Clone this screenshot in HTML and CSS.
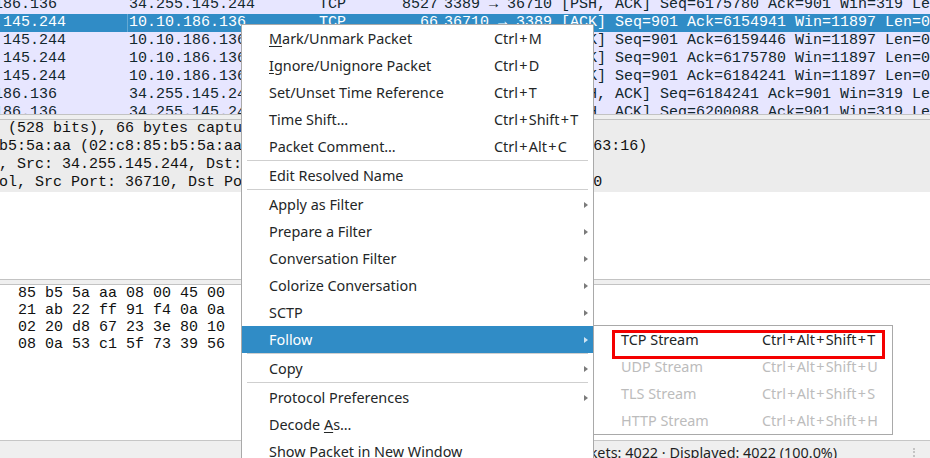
FILE: index.html
```html
<!DOCTYPE html>
<html>
<head>
<meta charset="utf-8">
<link rel="stylesheet" href="styles.css">
</head>
<body>
<div class="window">
  <div class="packet-list">
    <div class="rows">
      <div class="row"><span class="src">10.10.186.136</span><span class="dst">34.255.145.244</span><span class="proto">TCP</span><span class="len">8527</span><span class="info">3389 → 36710 [PSH, ACK] Seq=6175780 Ack=901 Win=319 Len=8461 TSval=1405181812</span></div>
      <div class="row sel"><span class="src">34.255.145.244</span><span class="dst focus">10.10.186.136</span><span class="proto">TCP</span><span class="len">66</span><span class="info">36710 → 3389 [ACK] Seq=901 Ack=6154941 Win=11897 Len=0 TSval=3584263104</span></div>
      <div class="row"><span class="src">34.255.145.244</span><span class="dst">10.10.186.136</span><span class="proto">TCP</span><span class="len">66</span><span class="info">36710 → 3389 [ACK] Seq=901 Ack=6159446 Win=11897 Len=0 TSval=3584263104</span></div>
      <div class="row"><span class="src">34.255.145.244</span><span class="dst">10.10.186.136</span><span class="proto">TCP</span><span class="len">66</span><span class="info">36710 → 3389 [ACK] Seq=901 Ack=6175780 Win=11897 Len=0 TSval=3584263105</span></div>
      <div class="row"><span class="src">34.255.145.244</span><span class="dst">10.10.186.136</span><span class="proto">TCP</span><span class="len">66</span><span class="info">36710 → 3389 [ACK] Seq=901 Ack=6184241 Win=11897 Len=0 TSval=3584263106</span></div>
      <div class="row"><span class="src">10.10.186.136</span><span class="dst">34.255.145.244</span><span class="proto">TCP</span><span class="len">15913</span><span class="info">3389 → 36710 [PSH, ACK] Seq=6184241 Ack=901 Win=319 Len=15847 TSval=1405181813</span></div>
      <div class="row"><span class="src">10.10.186.136</span><span class="dst">34.255.145.244</span><span class="proto">TCP</span><span class="len">2962</span><span class="info">3389 → 36710 [PSH, ACK] Seq=6200088 Ack=901 Win=319 Len=2896 TSval=1405181814</span></div>
    </div>
  </div>
  <div class="split"></div>
  <div class="details">
    <div class="tree">
      <div class="node">Frame 915: 66 bytes on wire (528 bits), 66 bytes captured (528 bits) on interface eth0, id 0</div>
      <div class="node">Ethernet II, Src: 02:c8:85:b5:5a:aa (02:c8:85:b5:5a:aa), Dst: 02:1f:3e:a1:63:16 (02:1f:3e:a1:63:16)</div>
      <div class="node">Internet Protocol Version 4, Src: 34.255.145.244, Dst: 10.10.186.136</div>
      <div class="node">Transmission Control Protocol, Src Port: 36710, Dst Port: 3389, Seq: 901, Ack: 6154941, Len: 0</div>
    </div>
  </div>
  <div class="split"></div>
  <div class="hex">
    <div class="bytes">0000  02 1f 3e a1 63 16 02 c8  85 b5 5a aa 08 00 45 00   ..&gt;.c.....Z...E.
0010  00 34 5e 1d 40 00 2f 06  21 ab 22 ff 91 f4 0a 0a   .4^.@./.!.".....
0020  ba 88 8f 66 0d 3d 6f 4e  02 20 d8 67 23 3e 80 10   ...f.=oN. .g#&gt;..
0030  01 fa 7c 41 00 00 01 01  08 0a 53 c1 5f 73 39 56   ..|A......S._s9V
0040  5d 2c                                              ],</div>
  </div>
  <div class="status">
    <span class="lead"></span>
    <span class="counts">Packets: 4022 · Displayed: 4022 (100.0%)</span>
    <span class="spacer"></span>
    <span class="grip"></span>
  </div>
</div>

<div class="menu">
  <div class="mi"><span><u>M</u>ark/Unmark Packet</span><span class="key">Ctrl<b>+</b>M</span></div>
  <div class="mi"><span><u>I</u>gnore/Unignore Packet</span><span class="key">Ctrl<b>+</b>D</span></div>
  <div class="mi"><span>Set/Unset Time Reference</span><span class="key">Ctrl<b>+</b>T</span></div>
  <div class="mi"><span>Time Shift…</span><span class="key">Ctrl<b>+</b>Shift<b>+</b>T</span></div>
  <div class="mi"><span>Packet Comment…</span><span class="key">Ctrl<b>+</b>Alt<b>+</b>C</span></div>
  <div class="sep"></div>
  <div class="mi"><span>Edit Resolved Name</span><span></span></div>
  <div class="sep"></div>
  <div class="mi sub"><span>Apply as Filter</span><span></span><i class="arrow"></i></div>
  <div class="mi sub"><span>Prepare a Filter</span><span></span><i class="arrow"></i></div>
  <div class="mi sub"><span>Conversation Filter</span><span></span><i class="arrow"></i></div>
  <div class="mi sub"><span>Colorize Conversation</span><span></span><i class="arrow"></i></div>
  <div class="mi sub"><span>SCTP</span><span></span><i class="arrow"></i></div>
  <div class="mi sub active"><span>Follow</span><span></span><i class="arrow"></i></div>
  <div class="sep"></div>
  <div class="mi sub"><span>Copy</span><span></span><i class="arrow"></i></div>
  <div class="sep"></div>
  <div class="mi sub"><span>Protocol Preferences</span><span></span><i class="arrow"></i></div>
  <div class="mi"><span>Decode <u>A</u>s…</span><span></span></div>
  <div class="mi"><span>Show Packet in New Window</span><span></span></div>
</div>

<div class="submenu">
  <div class="si"><span>TCP Stream</span><span class="key">Ctrl<b>+</b>Alt<b>+</b>Shift<b>+</b>T</span></div>
  <div class="si off"><span>UDP Stream</span><span class="key">Ctrl<b>+</b>Alt<b>+</b>Shift<b>+</b>U</span></div>
  <div class="si off"><span>TLS Stream</span><span class="key">Ctrl<b>+</b>Alt<b>+</b>Shift<b>+</b>S</span></div>
  <div class="si off"><span>HTTP Stream</span><span class="key">Ctrl<b>+</b>Alt<b>+</b>Shift<b>+</b>H</span></div>
</div>

<div class="annot"></div>
</body>
</html>
```

FILE: styles.css
```css
html, body {
  margin: 0;
  padding: 0;
}

body {
  width: 930px;
  height: 458px;
  overflow: hidden;
  position: relative;
  background: #ffffff;
  font-family: "Noto Sans", "DejaVu Sans", sans-serif;
}

.window {
  display: flex;
  flex-direction: column;
  height: 458px;
}

/* ---------- packet list ---------- */
.packet-list {
  height: 114px;
  flex: none;
  overflow: hidden;
  background: #ffffff;
}

.rows {
  margin-top: -4px;
  margin-left: -60px;
  font-family: "Liberation Mono", monospace;
  font-size: 15px;
  color: #12272e;
}

.row {
  display: flex;
  height: 18px;
  line-height: 18px;
  background: #e7e6ff;
  white-space: nowrap;
}

.row.sel {
  background: #308cc6;
  color: #ffffff;
}

.row .src { width: 189px; flex: none; }
.row .dst { width: 190px; flex: none; }
.row .proto { width: 80px; flex: none; }
.row .len { width: 39px; flex: none; text-align: right; }
.row .info { padding-left: 6px; flex: none; }

.row.sel .focus {
  box-shadow: inset 1px 0 0 rgba(255, 255, 255, 0.25);
  margin-left: -2px;
  padding-left: 2px;
}

/* ---------- splitters ---------- */
.split {
  flex: none;
  height: 6px;
  box-sizing: border-box;
  border-top: 1px solid #c3c3c3;
  border-bottom: 1px solid #c3c3c3;
  background: #efefef;
}

/* ---------- details ---------- */
.details {
  height: 159px;
  flex: none;
  overflow: hidden;
  background: #ffffff;
}

.tree {
  background: #ececec;
  font-family: "Liberation Mono", monospace;
  font-size: 15px;
  color: #111111;
}

.node {
  height: 18px;
  line-height: 18px;
  white-space: nowrap;
  margin-left: -244px;
}

/* ---------- hex ---------- */
.hex {
  height: 155px;
  flex: none;
  overflow: hidden;
  background: #ffffff;
}

.bytes {
  margin-left: -261px;
  white-space: pre;
  font-family: "Liberation Mono", monospace;
  font-size: 15px;
  line-height: 17px;
  color: #111111;
}

/* ---------- status bar ---------- */
.status {
  flex: none;
  height: 24px;
  box-sizing: border-box;
  border-top: 1px solid #c6c6c6;
  background: #efefef;
  display: flex;
  align-items: center;
  font-size: 14.4px;
  color: #1f1f1f;
  white-space: nowrap;
}

.status .lead { width: 566px; flex: none; }
.status .counts { flex: none; }
.status .spacer { flex: 1; }
.status .grip {
  flex: none;
  width: 0;
  height: 16px;
  border-left: 2px dotted #c4c4c4;
  margin-right: 15px;
  align-self: flex-end;
}

/* ---------- context menu ---------- */
.menu {
  position: absolute;
  left: 241px;
  top: 24px;
  width: 353px;
  box-sizing: border-box;
  background: #ffffff;
  border: 1px solid #a9a9a9;
  border-bottom: none;
  font-size: 14.4px;
  color: #232627;
}

.mi {
  display: grid;
  grid-template-columns: 225px 1fr 4px;
  align-items: center;
  height: 27px;
  padding-left: 27px;
  padding-right: 5px;
  white-space: nowrap;
}

.mi u {
  text-decoration-thickness: 1px;
  text-underline-offset: 2px;
}

.key b {
  font-weight: normal;
  padding: 0 1.3px;
}

.mi.active {
  background: #308cc6;
  color: #ffffff;
}

.arrow {
  width: 0;
  height: 0;
  border-left: 4px solid #7b7b7b;
  border-top: 3.5px solid transparent;
  border-bottom: 3.5px solid transparent;
}

.mi.active .arrow {
  border-left-color: #cfe4f3;
}

.sep {
  height: 2px;
  margin: 0 5px;
  box-sizing: border-box;
  border-top: 1px solid #cfcfcf;
}

/* ---------- submenu ---------- */
.submenu {
  position: absolute;
  left: 593px;
  top: 325px;
  width: 300px;
  box-sizing: border-box;
  background: #ffffff;
  border: 1px solid #a9a9a9;
  font-size: 14.4px;
  color: #232627;
}

.si {
  display: grid;
  grid-template-columns: 141px 1fr;
  align-items: center;
  height: 27px;
  padding-left: 27px;
  white-space: nowrap;
}

.si.off {
  color: #bcbcbc;
}

/* ---------- annotation ---------- */
.annot {
  position: absolute;
  left: 612px;
  top: 330px;
  width: 273px;
  height: 29px;
  box-sizing: border-box;
  border: 3px solid #f40000;
}
```
